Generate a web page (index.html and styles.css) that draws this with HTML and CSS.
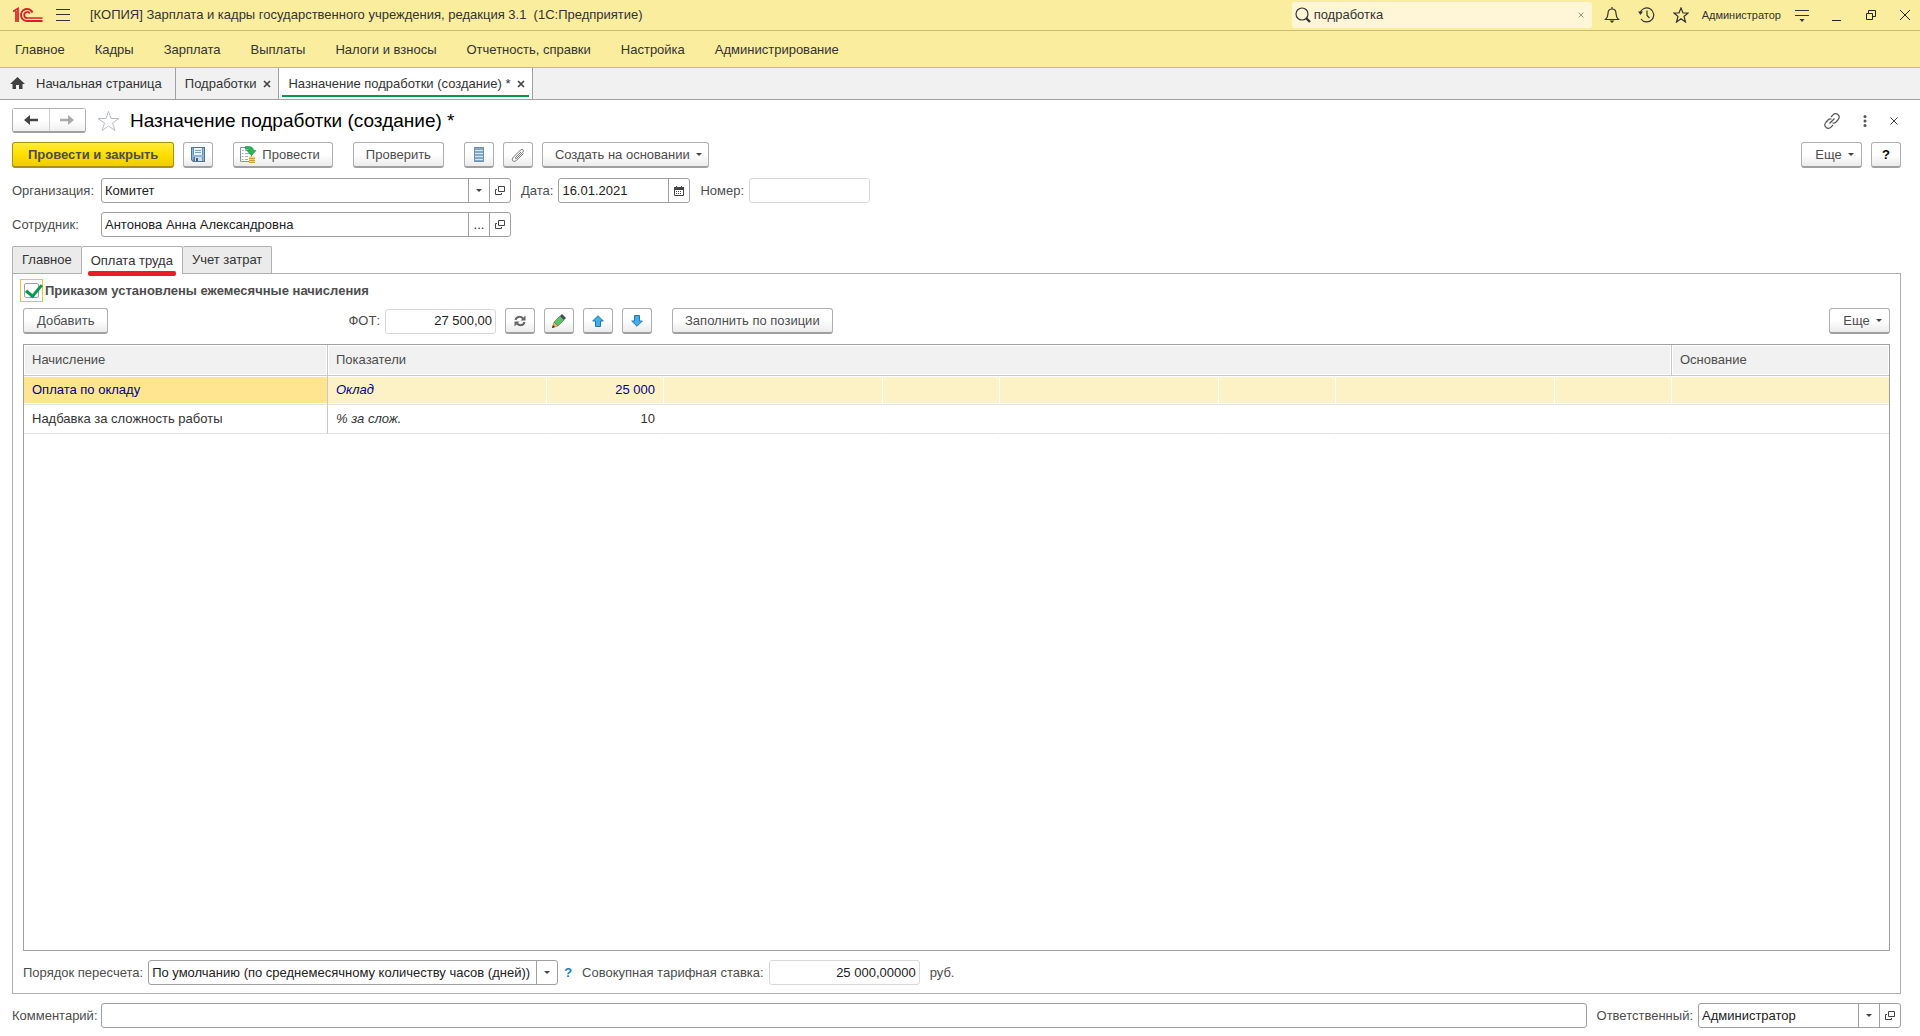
FILE: index.html
```html
<!DOCTYPE html>
<html lang="ru">

<head>
    <meta charset="UTF-8">
    <meta name="viewport" content="width=device-width, initial-scale=1.0">
    <title>Назначение подработки (создание) *</title>
    <link rel="stylesheet" href="styles.css">
</head>

<body>

    <header class="titlebar">
        <svg class="logo" width="30" height="16" viewBox="0 0 30 16" fill="none" stroke="#d9202a" stroke-width="2">
            <path d="M0 4.500L5 1.500V15M3 4V15" stroke-width="1.700"/>
            <path d="M19.500 5.500A6 6 0 1 0 14.500 14H29.500"/>
            <path d="M16.800 6.500A3 3 0 1 0 14.500 11H29.500" stroke-width="1.700"/>
        </svg>
        <button class="icon-btn burger" aria-label="Меню">
            <svg width="14" height="12" viewBox="0 0 14 12" stroke="#333"><path d="M0 .5H14M0 5.500H14M0 11.500H14"/></svg>
        </button>
        <span class="app-title">[КОПИЯ] Зарплата и кадры государственного учреждения, редакция 3.1&nbsp; (1С:Предприятие)</span>

        <div class="search">
            <svg width="16" height="16" viewBox="0 0 16 16" fill="none" stroke="#333" stroke-width="1.200"><circle cx="7" cy="7" r="6"/><path d="M11 11L15 15" stroke-width="2.400"/></svg>
            <input type="text" value="подработка" aria-label="Поиск">
            <button class="icon-btn" aria-label="Очистить">
                <svg width="6" height="6" viewBox="0 0 6 6" stroke="#a09a80"><path d="M.5 .5L5.500 5.500M5.500 .5L.5 5.500"/></svg>
            </button>
        </div>

        <div class="window-tools">
            <button class="icon-btn" aria-label="Уведомления">
                <svg width="16" height="16" viewBox="0 0 16 16" fill="none" stroke="#333" stroke-width="1.200"><path d="M1.500 12.500C3.500 10.500 4 9 4 6.500C4 3.500 5.500 2 8 2S12 3.500 12 6.500C12 9 12.500 10.500 14.500 12.500ZM8 0V2"/><path d="M5.500 13.500H10.500L8 16Z" fill="#333" stroke="none"/></svg>
            </button>
            <button class="icon-btn" aria-label="История">
                <svg width="17" height="16" viewBox="0 0 17 16" fill="none" stroke="#333" stroke-width="1.200"><path d="M2 6A7 7 0 1 1 3 12"/><path d="M9 3.500V8.500L11.500 11"/><path d="M0 4.500H5L2.500 8Z" fill="#333" stroke="none"/></svg>
            </button>
            <button class="icon-btn" aria-label="Избранное">
                <svg width="16" height="16" viewBox="0 0 16 16" fill="none" stroke="#333" stroke-width="1.200"><path d="M8 1L10 6H15L11 9.500L12.500 15L8 11.700L3.500 15L5 9.500L1 6H6Z"/></svg>
            </button>
            <a class="user" href="#">Администратор</a>
            <button class="icon-btn" aria-label="Настройки">
                <svg width="16" height="14" viewBox="0 0 16 14" stroke="#333" stroke-width="1.200"><path d="M1 2.500H15M1 7.500H15"/><path d="M5.500 11H10.500L8 14Z" fill="#333" stroke="none"/></svg>
            </button>
        </div>
        <div class="window-ctl">
            <button class="icon-btn" aria-label="Свернуть">
                <svg width="10" height="12" viewBox="0 0 10 12" stroke="#222"><path d="M0 11.500H9"/></svg>
            </button>
            <button class="icon-btn" aria-label="Развернуть">
                <svg width="10" height="10" viewBox="0 0 10 10" fill="none" stroke="#222"><path d="M.5 3.500H6.500V9.500H.5ZM2.500 3.500V.5H9.500V6.500H6.500"/></svg>
            </button>
            <button class="icon-btn" aria-label="Закрыть">
                <svg width="10" height="10" viewBox="0 0 10 10" stroke="#222"><path d="M0 0L10 10M10 0L0 10"/></svg>
            </button>
        </div>
    </header>

    <nav class="sections">
        <a href="#">Главное</a>
        <a href="#">Кадры</a>
        <a href="#">Зарплата</a>
        <a href="#">Выплаты</a>
        <a href="#">Налоги и взносы</a>
        <a href="#">Отчетность, справки</a>
        <a href="#">Настройка</a>
        <a href="#">Администрирование</a>
    </nav>

    <div class="windows">
        <div class="window-tab home">
            <svg width="15" height="13" viewBox="0 0 15 13" fill="#404040"><path d="M7.500 0L15 7H12.500V12H9V8H6V12H2.500V7H0Z"/></svg>
            <a href="#">Начальная страница</a>
        </div>
        <div class="window-tab">
            <a href="#">Подработки</a>
            <button class="icon-btn" aria-label="Закрыть">
                <svg width="8" height="8" viewBox="0 0 8 8" stroke="#444" stroke-width="1.700"><path d="M1 1L7 7M7 1L1 7"/></svg>
            </button>
        </div>
        <div class="window-tab active">
            <a href="#">Назначение подработки (создание) *</a>
            <button class="icon-btn" aria-label="Закрыть">
                <svg width="8" height="8" viewBox="0 0 8 8" stroke="#444" stroke-width="1.700"><path d="M1 1L7 7M7 1L1 7"/></svg>
            </button>
        </div>
    </div>

    <main class="form">

        <div class="form-head">
            <div class="history">
                <button aria-label="Назад">
                    <svg width="14" height="10" viewBox="0 0 14 10" fill="#444"><path d="M0 5L6 0V3.800H14V6.200H6V10Z"/></svg>
                </button>
                <button aria-label="Вперед">
                    <svg width="14" height="10" viewBox="0 0 14 10" fill="#aaa"><path d="M14 5L8 0V3.800H0V6.200H8V10Z"/></svg>
                </button>
            </div>
            <button class="icon-btn fav" aria-label="В избранное">
                <svg width="23" height="22" viewBox="0 0 23 22" fill="none" stroke="#b8bcc2"><path d="M11.500 1.500L14 8.500H22L15.500 13L18 20.500L11.500 16L5 20.500L7.500 13L1 8.500H9Z"/></svg>
            </button>
            <h1>Назначение подработки (создание) *</h1>
            <div class="form-ctl">
                <button class="icon-btn" aria-label="Ссылка">
                    <svg width="16" height="16" viewBox="0 0 16 16" fill="none" stroke="#555" stroke-width="1.200"><path d="M7 4L9 1.800C10.500 .3 12.800 .4 14 1.700C15.500 3 15.400 5 14.200 6.500L12 9C11 10 9.500 10.200 8.500 9.700M9 12L7 14.200C5.500 15.700 3.200 15.600 2 14.300C.5 13 .6 11 1.800 9.500L4 7C5 6 6.500 5.800 7.500 6.300M5.500 10.500L10.500 5.500"/></svg>
                </button>
                <button class="icon-btn" aria-label="Действия">
                    <svg width="4" height="12" viewBox="0 0 4 12" fill="#555"><circle cx="2" cy="1.500" r="1.500"/><circle cx="2" cy="6" r="1.500"/><circle cx="2" cy="10.500" r="1.500"/></svg>
                </button>
                <button class="icon-btn" aria-label="Закрыть">
                    <svg width="8" height="8" viewBox="0 0 8 8" stroke="#444"><path d="M.5 .5L7.500 7.500M7.500 .5L.5 7.500"/></svg>
                </button>
            </div>
        </div>

        <div class="toolbar">
            <button class="btn primary">Провести и закрыть</button>
            <button class="btn square" aria-label="Записать">
                <svg width="14" height="15" viewBox="0 0 14 15"><path d="M0 0H14V15H2L0 13Z" fill="#4f7396"/><path d="M1 1H2.500V14L1 12.500ZM11.500 1H13V14H11.500Z" fill="#8fb5da"/><path d="M2 8H12V10H2Z" fill="#8fb5da"/><path d="M3 1H11V8H3Z" fill="#e8f2fa"/><path d="M4 3.500H10M4 5.500H10" stroke="#7da0c0"/><path d="M4 10H11V14H4Z" fill="#cfdde8"/><path d="M5 11H7V14H5Z" fill="#3f6080"/></svg>
            </button>
            <button class="btn post gap-l">
                <svg width="16" height="17" viewBox="0 0 16 17"><path d="M.5 1.500H11.500V15.500H.5Z" fill="#fff" stroke="#8295a5"/><path d="M2 4.500H3.500M5 4.500H10M2 7.500H3.500M5 7.500H10M2 10.500H3.500M5 10.500H8M2 13.500H3.500M5 13.500H8" stroke="#9aabb8"/><path d="M5.500 .5C10 0 13.500 1 13.500 4.500H16L11.500 9.500L7 4.500H9.700C9.300 3.300 8 3 5.500 3.200Z" fill="#25b855" stroke="#128838" stroke-width=".6"/><path d="M9 10.500H15V16.500H9Z" fill="#f8d468"/><path d="M9 12.500H15M9 14.500H15M9 16.500H15" stroke="#d09c2c"/></svg>
                Провести
            </button>
            <button class="btn gap-l">Проверить</button>
            <button class="btn square gap-l" aria-label="Движения документа">
                <svg width="10" height="15" viewBox="0 0 10 15"><path d="M0 0H10V15H0Z" fill="#86a8c4"/><path d="M1 3.500H9M1 6.500H9M1 9.500H9M1 12.500H9" stroke="#d5e5f2"/><path d="M.5 .5H9.500V14.500H.5Z" fill="none" stroke="#6c90b0"/></svg>
            </button>
            <button class="btn square" aria-label="Присоединенные файлы">
                <svg width="14" height="14" viewBox="0 0 14 14" fill="none" stroke="#777"><path d="M10 4L4.800 9.200C3.800 10.200 4.800 11.200 5.800 10.200L11.500 4.500C13.500 2.500 11.500 .3 9.500 2L2.500 9C-.5 12 2.500 15 5.500 12.300L12.500 5.500"/></svg>
            </button>
            <button class="btn menu">Создать на основании <i class="caret"></i></button>
            <button class="btn menu more">Еще <i class="caret"></i></button>
            <button class="btn square help">?</button>
        </div>

        <div class="row">
            <label class="label-col" for="org">Организация:</label>
            <div class="field wide">
                <input type="text" id="org" value="Комитет">
                <button aria-label="Выбрать"><i class="caret"></i></button>
                <button aria-label="Открыть"><svg width="10" height="9" viewBox="0 0 10 9" fill="none" stroke="#444"><path d="M3.500 .5H9.500V5.500H3.500ZM2 3.500H.5V8.500H6.500V7"/></svg></button>
            </div>
            <label for="date">Дата:</label>
            <div class="field date">
                <input type="text" id="date" value="16.01.2021">
                <button aria-label="Календарь"><svg width="10" height="10" viewBox="0 0 10 10"><path d="M.5 1.500H9.500V9.500H.5Z" fill="#fff" stroke="#444"/><path d="M0 1H10V4H0ZM2 0H3V2H2ZM7 0H8V2H7Z" fill="#444"/><path d="M2 5.500H8M2 7.500H8" stroke="#444" stroke-dasharray="1 1"/></svg></button>
            </div>
            <label for="number">Номер:</label>
            <div class="field readonly number"><input type="text" id="number" readonly></div>
        </div>

        <div class="row">
            <label class="label-col" for="employee">Сотрудник:</label>
            <div class="field wide">
                <input type="text" id="employee" value="Антонова Анна Александровна">
                <button aria-label="Выбрать">...</button>
                <button aria-label="Открыть"><svg width="10" height="9" viewBox="0 0 10 9" fill="none" stroke="#444"><path d="M3.500 .5H9.500V5.500H3.500ZM2 3.500H.5V8.500H6.500V7"/></svg></button>
            </div>
        </div>

        <div class="tabs">
            <button>Главное</button>
            <button class="active">Оплата труда</button>
            <button>Учет затрат</button>
        </div>

        <section class="panel">
            <div class="check">
                <span class="check-box"><input type="checkbox" id="monthly" checked></span>
                <label for="monthly">Приказом установлены ежемесячные начисления</label>
            </div>

            <div class="toolbar list-toolbar">
                <button class="btn add">Добавить</button>
                <label for="fot">ФОТ:</label>
                <div class="field readonly fot"><input type="text" id="fot" value="27 500,00" readonly></div>
                <button class="btn square" aria-label="Обновить">
                    <svg width="12" height="12" viewBox="0 0 12 12" fill="none" stroke="#666" stroke-width="2"><path d="M1.500 5C2.200 1.500 6.500 .8 9 3.500M10.500 7C9.800 10.500 5.500 11.200 3 8.500"/><path d="M11.500 .5V5.500H6.500ZM.5 11.500V6.500H5.500Z" fill="#666" stroke="none"/></svg>
                </button>
                <button class="btn square" aria-label="Изменить">
                    <svg width="14" height="14" viewBox="0 0 14 14"><path d="M0 14L2 8L6 12Z" fill="#f0b468" stroke="#a8742c" stroke-width=".5"/><path d="M0 14L1 11L3 13Z" fill="#333"/><path d="M2 8L8 2L12 6L6 12Z" fill="#5cc068" stroke="#2f7d3a" stroke-width=".6"/><path d="M8 2L10 0L14 4L12 6Z" fill="#3d4d66"/></svg>
                </button>
                <button class="btn square" aria-label="Вверх">
                    <svg width="12" height="12" viewBox="0 0 12 12" fill="#41aee8" stroke="#2479ad"><path d="M6 .7L11.300 6H8.500V11.500H3.500V6H.7Z"/></svg>
                </button>
                <button class="btn square" aria-label="Вниз">
                    <svg width="12" height="12" viewBox="0 0 12 12" fill="#41aee8" stroke="#2479ad"><path d="M6 11.300L.7 6H3.500V.5H8.500V6H11.300Z"/></svg>
                </button>
                <button class="btn gap-l">Заполнить по позиции</button>
                <button class="btn menu more">Еще <i class="caret"></i></button>
            </div>

            <div class="grid">
                <table>
                    <colgroup>
                        <col class="c-name">
                        <col class="c-ind"><col class="c-val">
                        <col class="c-ind"><col class="c-val">
                        <col class="c-ind"><col class="c-val">
                        <col class="c-ind"><col class="c-val">
                        <col>
                    </colgroup>
                    <thead>
                        <tr>
                            <th>Начисление</th>
                            <th colspan="8">Показатели</th>
                            <th>Основание</th>
                        </tr>
                    </thead>
                    <tbody>
                        <tr class="selected">
                            <td>Оплата по окладу</td>
                            <td class="ind">Оклад</td>
                            <td class="val">25 000</td>
                            <td></td><td></td><td></td><td></td><td></td><td></td><td></td>
                        </tr>
                        <tr>
                            <td>Надбавка за сложность работы</td>
                            <td class="ind">% за слож.</td>
                            <td class="val">10</td>
                            <td></td><td></td><td></td><td></td><td></td><td></td><td></td>
                        </tr>
                    </tbody>
                </table>
            </div>

            <div class="row recalc">
                <label for="recalc">Порядок пересчета:</label>
                <div class="field select">
                    <select id="recalc">
                        <option>По умолчанию (по среднемесячному количеству часов (дней))</option>
                    </select>
                    <span class="select-arrow"><i class="caret"></i></span>
                </div>
                <a class="hint" href="#">?</a>
                <label for="rate">Совокупная тарифная ставка:</label>
                <div class="field readonly rate"><input type="text" id="rate" value="25 000,00000" readonly></div>
                <span>руб.</span>
            </div>
        </section>

        <div class="row footer">
            <label class="label-col" for="comment">Комментарий:</label>
            <div class="field comment"><input type="text" id="comment"></div>
            <label for="resp">Ответственный:</label>
            <div class="field resp">
                <input type="text" id="resp" value="Администратор">
                <button aria-label="Выбрать"><i class="caret"></i></button>
                <button aria-label="Открыть"><svg width="10" height="9" viewBox="0 0 10 9" fill="none" stroke="#444"><path d="M3.500 .5H9.500V5.500H3.500ZM2 3.500H.5V8.500H6.500V7"/></svg></button>
            </div>
        </div>

    </main>

</body>

</html>
```
FILE: styles.css
```css
* {
    box-sizing: border-box;
}

body {
    margin: 0;
    min-height: 100vh;
    display: flex;
    flex-direction: column;
    background: #fff;
    color: #4d4d4d;
    font-family: "Liberation Sans", Arial, sans-serif;
    font-size: 13px;
    line-height: 16px;
}

button, input, select {
    font: inherit;
    color: inherit;
    margin: 0;
}

button {
    cursor: pointer;
    white-space: nowrap;
}

label, span {
    white-space: nowrap;
}

a {
    color: inherit;
    text-decoration: none;
}

svg {
    display: block;
    flex: none;
}

.icon-btn {
    display: flex;
    align-items: center;
    justify-content: center;
    padding: 0;
    border: none;
    background: none;
}

.caret {
    border: 3px solid transparent;
    border-top-color: #444;
    border-bottom: none;
}

/* title bar */

.titlebar {
    display: flex;
    align-items: center;
    height: 31px;
    padding: 0 10px 0 13px;
    background: #fbed9e;
    border-bottom: 1px solid #c8bb70;
    color: #333;
}

.burger {
    margin: 0 20px 0 13px;
}

.search {
    display: flex;
    align-items: center;
    width: 300px;
    height: 26px;
    margin-left: auto;
    padding: 0 8px 0 3px;
    background: #fef6d6;
    border-radius: 3px;
}

.search input {
    flex: 1;
    min-width: 0;
    padding: 0 3px;
    border: none;
    outline: none;
    background: none;
}

.window-tools {
    display: flex;
    align-items: center;
    gap: 18px;
    margin-left: 12px;
}

.user {
    margin: 0 -5px;
    font-size: 11px;
}

.window-ctl {
    display: flex;
    align-items: center;
    gap: 24px;
    margin-left: 22px;
}

/* sections */

.sections {
    display: flex;
    align-items: center;
    gap: 30px;
    height: 37px;
    padding: 2px 15px 0;
    background: #fbed9e;
    border-bottom: 1px solid #c8bb70;
    color: #333;
}

/* open windows */

.windows {
    display: flex;
    height: 32px;
    background: #f1f1f1;
    border-bottom: 1px solid #a0a0a0;
    color: #333;
}

.window-tab {
    display: flex;
    align-items: center;
    gap: 7px;
    padding: 0 7px 0 9px;
    border-right: 1px solid #a0a0a0;
}

.window-tab.home {
    gap: 11px;
    padding-right: 13px;
    padding-left: 10px;
}

.window-tab.active {
    background: linear-gradient(#009b4c, #009b4c) center bottom 2px / calc(100% - 6px) 2px no-repeat #fff;
}

/* form */

.form {
    flex: 1;
    display: flex;
    flex-direction: column;
    padding: 8px 19px 8px 12px;
}

.form-head {
    display: flex;
    align-items: center;
    height: 25px;
    margin-bottom: 9px;
}

.form-head h1 {
    margin: 0;
    color: #000;
    font-size: 19px;
    font-weight: normal;
    line-height: 22px;
}

.history {
    display: flex;
    width: 74px;
    height: 25px;
    border: 1px solid #b0b0b0;
    border-bottom: 2px solid #a0a0a0;
    border-radius: 3px;
}

.history button {
    flex: 1;
    display: flex;
    align-items: center;
    justify-content: center;
    padding: 0;
    border: none;
    background: linear-gradient(#fff 50%, #f0f0f0);
}

.history button + button {
    border-left: 1px solid #d0d0d0;
}

.fav {
    margin: 0 10px 0 11px;
}

.form-ctl {
    display: flex;
    align-items: center;
    gap: 23px;
    margin-left: auto;
    padding-right: 3px;
}

.toolbar {
    display: flex;
    align-items: center;
    gap: 9px;
    margin-bottom: 10px;
}

.btn {
    display: flex;
    align-items: center;
    justify-content: center;
    gap: 6px;
    height: 26px;
    padding: 0 12px;
    background: linear-gradient(#fff 50%, #ebebeb);
    border: 1px solid #b0b0b0;
    border-bottom: 2px solid #a0a0a0;
    border-radius: 3px;
}

.btn.square {
    width: 30px;
    padding: 0;
}

.btn.gap-l {
    margin-left: 11px;
}

.btn.post {
    padding-left: 6px;
}

.btn.primary {
    padding: 0 15px;
    background: linear-gradient(#ffeb3c, #ffe000 50%, #efcc00);
    border-color: #a89410;
    font-weight: bold;
}

.btn.menu {
    padding-right: 6px;
}

.btn.more {
    min-width: 61px;
    margin-left: auto;
}

.btn.help {
    color: #000;
    font-weight: bold;
}

.row {
    display: flex;
    align-items: center;
    gap: 10px;
    margin-bottom: 9px;
}

.label-col {
    width: 79px;
}

.field {
    display: flex;
    height: 25px;
    border: 1px solid #a0a0a0;
    border-radius: 3px;
    background: #fff;
    color: #222;
}

.field input, .field select {
    flex: 1;
    min-width: 0;
    padding: 0 3px;
    border: none;
    outline: none;
    background: none;
}

.field button {
    display: flex;
    align-items: center;
    justify-content: center;
    width: 21px;
    padding: 0;
    border: none;
    border-left: 1px solid #a0a0a0;
    background: none;
}

.field.readonly {
    border-color: #d9d9d9;
}

.field.wide {
    width: 410px;
}

.field.date {
    width: 132px;
    margin-left: -5px;
}

.field.number {
    width: 121px;
    margin-left: -5px;
}

/* form tabs */

.tabs {
    display: flex;
}

.tabs button {
    position: relative;
    height: 27px;
    padding: 0 9px;
    background: #ebebeb;
    border: 1px solid #b0b0b0;
    border-bottom: none;
    border-left: none;
    border-radius: 2px 2px 0 0;
    color: #333;
}

.tabs button:first-child {
    border-left: 1px solid #b0b0b0;
}

.tabs .active {
    z-index: 1;
    margin-bottom: -1px;
    height: 28px;
    background: #fff;
}

.tabs .active::after {
    content: "";
    position: absolute;
    left: 6px;
    right: 6px;
    bottom: -2px;
    height: 5px;
    border-radius: 2px;
    background: #ed1c24;
}

.panel {
    flex: 1;
    display: flex;
    flex-direction: column;
    padding: 5px 10px 8px;
    border: 1px solid #b0b0b0;
}

.check {
    display: flex;
    align-items: center;
    gap: 2px;
    margin: 0 0 6px -3px;
    font-weight: bold;
}

.check-box {
    padding: 3px;
    border: 1px solid #f5c518;
}

.check input {
    display: block;
    appearance: none;
    width: 15px;
    height: 15px;
    margin: 0;
    border: 1px solid #a0a0a0;
    border-radius: 2px;
}

.check input:checked::after {
    content: "";
    display: block;
    width: 7px;
    height: 13px;
    margin: -3px 0 0 4px;
    border: solid #009b4c;
    border-width: 0 3px 3px 0;
    transform: rotate(40deg);
}

.list-toolbar .add {
    padding: 0 13px;
    margin-right: 231px;
}

.list-toolbar label {
    margin-right: -4px;
}

.field.fot {
    width: 111px;
}

.fot input, .rate input {
    text-align: right;
}

.grid {
    flex: 1;
    border: 1px solid #a0a0a0;
}

table {
    width: 100%;
    table-layout: fixed;
    border-spacing: 0;
}

.c-name {
    width: 304px;
}

.c-ind {
    width: 219px;
}

.c-val {
    width: 117px;
}

th {
    height: 31px;
    padding: 0 8px;
    background: #f1f1f1;
    border-right: 1px solid #c8c8c8;
    border-bottom: 1px solid #c8c8c8;
    box-shadow: inset 0 0 0 1px #fff;
    font-weight: normal;
    text-align: left;
}

td {
    height: 29px;
    padding: 0 8px;
    border-right: 1px solid transparent;
    border-bottom: 1px solid #e4e4e4;
    color: #333;
    white-space: nowrap;
}

td:first-child {
    border-right-color: #c8c8c8;
}

th:last-child, td:last-child {
    border-right: none;
}

.selected td {
    background: #fdf2c6;
    box-shadow: inset 0 1px #fff, inset 0 -1px #fff;
    border-right-color: #fff;
    color: #00008b;
}

.selected td:first-child {
    background: #ffe58f;
    border-right-color: #c8c8c8;
}

.ind {
    font-style: italic;
}

.val {
    text-align: right;
}

.recalc {
    margin: 9px 0 0;
}

.recalc label {
    margin-right: -5px;
}

.field.select {
    width: 410px;
}

.field select {
    appearance: none;
}

.select-arrow {
    display: flex;
    align-items: center;
    justify-content: center;
    width: 21px;
    border-left: 1px solid #a0a0a0;
    pointer-events: none;
}

.hint {
    margin: 0 0 0 -4px;
    color: #1a7cc4;
    font-weight: bold;
}

.field.rate {
    width: 151px;
}

.footer {
    margin: 9px 0 0;
}

.field.comment {
    flex: 1;
}

.field.resp {
    width: 203px;
    margin-left: -5px;
}
```
